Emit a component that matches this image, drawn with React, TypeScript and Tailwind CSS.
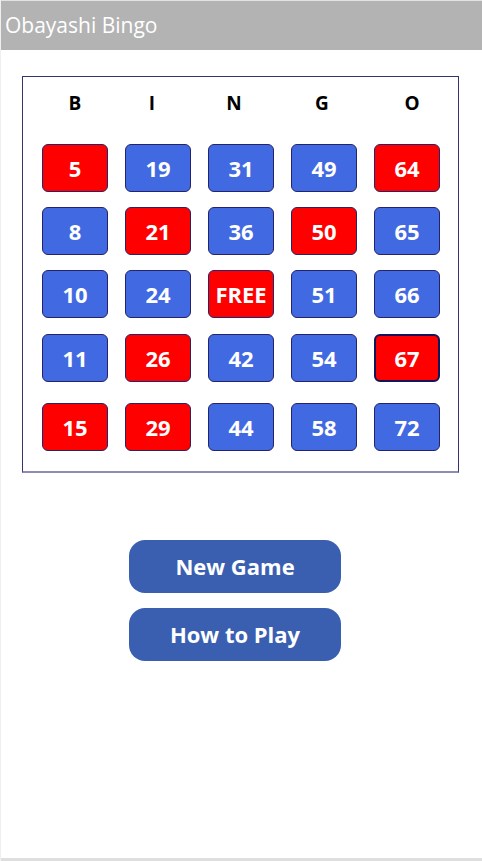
import React from 'react';

type Cell = { label: string; marked: boolean; selected?: boolean };

// column headings, each with its own left offset to line up like the original
const letters = [
  { l: 'B', ml: 'ml-0' },
  { l: 'I', ml: 'ml-[11px]' },
  { l: 'N', ml: 'ml-[16px]' },
  { l: 'G', ml: 'ml-[22px]' },
  { l: 'O', ml: 'ml-[24px]' },
];

const rows: Cell[][] = [
  [
    { label: '5', marked: true },
    { label: '19', marked: false },
    { label: '31', marked: false },
    { label: '49', marked: false },
    { label: '64', marked: true },
  ],
  [
    { label: '8', marked: false },
    { label: '21', marked: true },
    { label: '36', marked: false },
    { label: '50', marked: true },
    { label: '65', marked: false },
  ],
  [
    { label: '10', marked: false },
    { label: '24', marked: false },
    { label: 'FREE', marked: true },
    { label: '51', marked: false },
    { label: '66', marked: false },
  ],
  [
    { label: '11', marked: false },
    { label: '26', marked: true },
    { label: '42', marked: false },
    { label: '54', marked: false },
    { label: '67', marked: true, selected: true },
  ],
  [
    { label: '15', marked: true },
    { label: '29', marked: true },
    { label: '44', marked: false },
    { label: '58', marked: false },
    { label: '72', marked: false },
  ],
];

const rowMargins = ['', '', '', 'mt-[1px]', 'mt-[6px]'];

const Tile: React.FC<{ cell: Cell }> = ({ cell }) => (
  <div
    className={`flex h-[48px] w-[66px] items-center justify-center rounded-[6px] text-[22px] font-bold text-white ${
      cell.marked ? 'bg-[#ff0000]' : 'bg-[#4169e1]'
    } ${cell.selected ? 'border-2 border-[#141458]' : 'border border-[#25236b]'}`}
  >
    {cell.label}
  </div>
);

const App: React.FC = () => {
  return (
    <div
      className="flex h-[861px] w-[482px] flex-col border-l border-[#efefef] bg-white"
      style={{ fontFamily: '"Open Sans", "Noto Sans", sans-serif' }}
    >
      <div className="flex h-[50px] items-center border-t border-[#e2e2e2] bg-[#b3b3b3] pl-[4px]">
        <span className="text-[21px] text-white">Obayashi Bingo</span>
      </div>

      <div className="flex-1">
        <div className="ml-[21px] mt-[26px] h-[397px] w-[437px] border border-[#34336f] border-b-2 border-b-[#8c8cb4] pl-[19px] pt-[12px]">
          <div className="flex">
            {letters.map(({ l, ml }) => (
              <div
                key={l}
                className={`flex h-[28px] w-[66px] items-center justify-center text-[19px] font-bold text-black ${ml}`}
              >
                {l}
              </div>
            ))}
          </div>

          <div className="mt-[27px] flex flex-col gap-[15px]">
            {rows.map((row, i) => (
              <div
                key={i}
                className={`grid w-[399px] grid-cols-[repeat(5,66px)] gap-x-[17px] ${rowMargins[i]}`}
              >
                {row.map((cell) => (
                  <Tile key={cell.label} cell={cell} />
                ))}
              </div>
            ))}
          </div>
        </div>

        <div className="mt-[67px] flex flex-col items-start gap-[15px] pl-[128px]">
          <button className="h-[53px] w-[212px] rounded-[16px] bg-[#3a5fb1] text-[22px] font-bold text-white">
            New Game
          </button>
          <button className="h-[53px] w-[212px] rounded-[16px] bg-[#3a5fb1] text-[22px] font-bold text-white">
            How to Play
          </button>
        </div>
      </div>

      <div className="h-[3px] bg-[#dedede]" />
    </div>
  );
};

export default App;
